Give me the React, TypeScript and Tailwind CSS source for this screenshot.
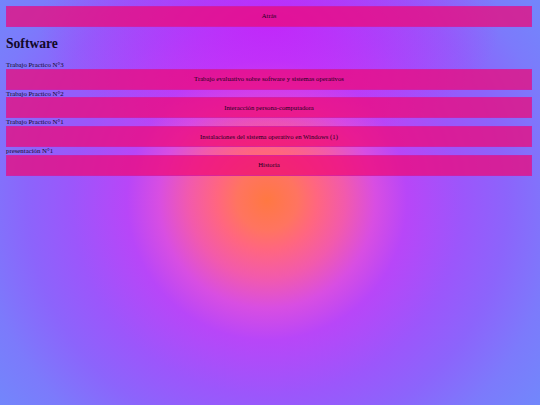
import React from "react";

interface Entry {
  label: string;
  title: string;
}

const entries: Entry[] = [
  { label: "Trabajo Practico N°3", title: "Trabajo evaluativo sobre software y sistemas operativos" },
  { label: "Trabajo Practico N°2", title: "Interacción persona-computadora" },
  { label: "Trabajo Practico N°1", title: "Instalaciones del sistema operativo en Windows (1)" },
  { label: "presentación N°1", title: "Historia" },
];

function Bar({ children }: { children: React.ReactNode }) {
  return (
    <div className="flex h-[21px] items-center justify-center border border-[rgba(190,40,190,0.45)] bg-[rgba(238,10,120,0.74)] text-[6.7px] text-[#1a0020]">
      {children}
    </div>
  );
}

export default function App() {
  return (
    <div
      className="min-h-screen w-full bg-[#6e8cfb] bg-[radial-gradient(ellipse_230px_120px_at_50%_6%,rgba(200,30,250,0.8),rgba(200,30,250,0)_100%),radial-gradient(circle_at_267px_200px,#ff7842_0px,#ff7460_30px,#ff6680_50px,#f25aac_78px,#d84ee2_108px,#b846f8_140px,#9c56fb_195px,#8c64fb_240px,#7c7afb_290px,#6e8cfb_360px)] pt-[6px] pl-[6px] pr-[8px] text-[#120a28]"
      style={{ fontFamily: '"Liberation Serif", "Times New Roman", serif' }}
    >
      <Bar>Atrás</Bar>

      <h1 className="my-[9.2px] text-[13.6px] font-bold leading-[15.6px] text-[#120828]">Software</h1>

      {entries.map(e => (
        <div key={e.label}>
          <p className="text-[6.8px] leading-[7.7px]">{e.label}</p>
          <Bar>{e.title}</Bar>
        </div>
      ))}
    </div>
  );
}
